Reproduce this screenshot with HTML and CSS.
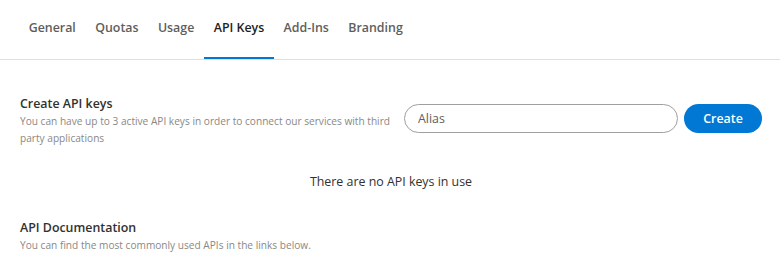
FILE: index.html
```html
<!DOCTYPE html>
<html>
<head>
<meta charset="utf-8">
<link rel="stylesheet" href="styles.css">
</head>
<body>
<nav class="tabs">
  <div class="tab">General</div>
  <div class="tab">Quotas</div>
  <div class="tab">Usage</div>
  <div class="tab active">API Keys</div>
  <div class="tab">Add-Ins</div>
  <div class="tab">Branding</div>
</nav>
<main class="content">
  <section class="create">
    <div class="info">
      <h2 class="title">Create API keys</h2>
      <p class="desc">You can have up to 3 active API keys in order to connect our services with third party applications</p>
    </div>
    <div class="form">
      <input class="alias" type="text" placeholder="Alias">
      <button class="btn">Create</button>
    </div>
  </section>
  <p class="empty">There are no API keys in use</p>
  <section class="docs">
    <h2 class="title">API Documentation</h2>
    <p class="desc">You can find the most commonly used APIs in the links below.</p>
  </section>
</main>
</body>
</html>
```
FILE: styles.css
```css
* { box-sizing: border-box; }
body {
  margin: 0;
  font-family: "Open Sans", "Noto Sans", sans-serif;
  background: #fff;
  color: #323130;
}
.tabs {
  display: flex;
  padding: 0 0 0 19px;
  height: 60px;
  border-bottom: 1px solid #e1dfdd;
}
.tab {
  padding: 0 9.7px 2px;
  display: flex;
  align-items: center;
  font-size: 12.4px;
  font-weight: 600;
  color: #605e5c;
  border-bottom: 2px solid transparent;
  height: 59px;
}
.tab.active {
  color: #201f1e;
  border-bottom-color: #0078d4;
}
.content {
  padding: 0 18px 0 20px;
}
.create {
  display: flex;
  justify-content: space-between;
  align-items: flex-start;
  margin-top: 35px;
}
.info { width: 385px; }
.title {
  margin: 0;
  font-size: 12.4px;
  font-weight: 600;
  color: #323130;
  line-height: 18px;
}
.desc {
  margin: 0;
  font-size: 10.15px;
  color: #8a8886;
  line-height: 17px;
}
.form {
  display: flex;
  gap: 6px;
  margin-top: 9px;
}
.alias {
  width: 274px;
  height: 29px;
  border: 1px solid #a19f9d;
  border-radius: 15px;
  padding: 0 13px;
  font-family: inherit;
  font-size: 12.4px;
  color: #323130;
  outline: none;
}
.alias::placeholder { color: #605e5c; }
.btn {
  width: 78px;
  height: 29px;
  border: none;
  border-radius: 15px;
  background: #0078d4;
  color: #fff;
  font-family: inherit;
  font-size: 12.4px;
  font-weight: 600;
}
.empty {
  margin: 26px 0 0;
  text-align: center;
  font-size: 12.4px;
  color: #323130;
  line-height: 18px;
}
.docs { margin-top: 28px; }
```
